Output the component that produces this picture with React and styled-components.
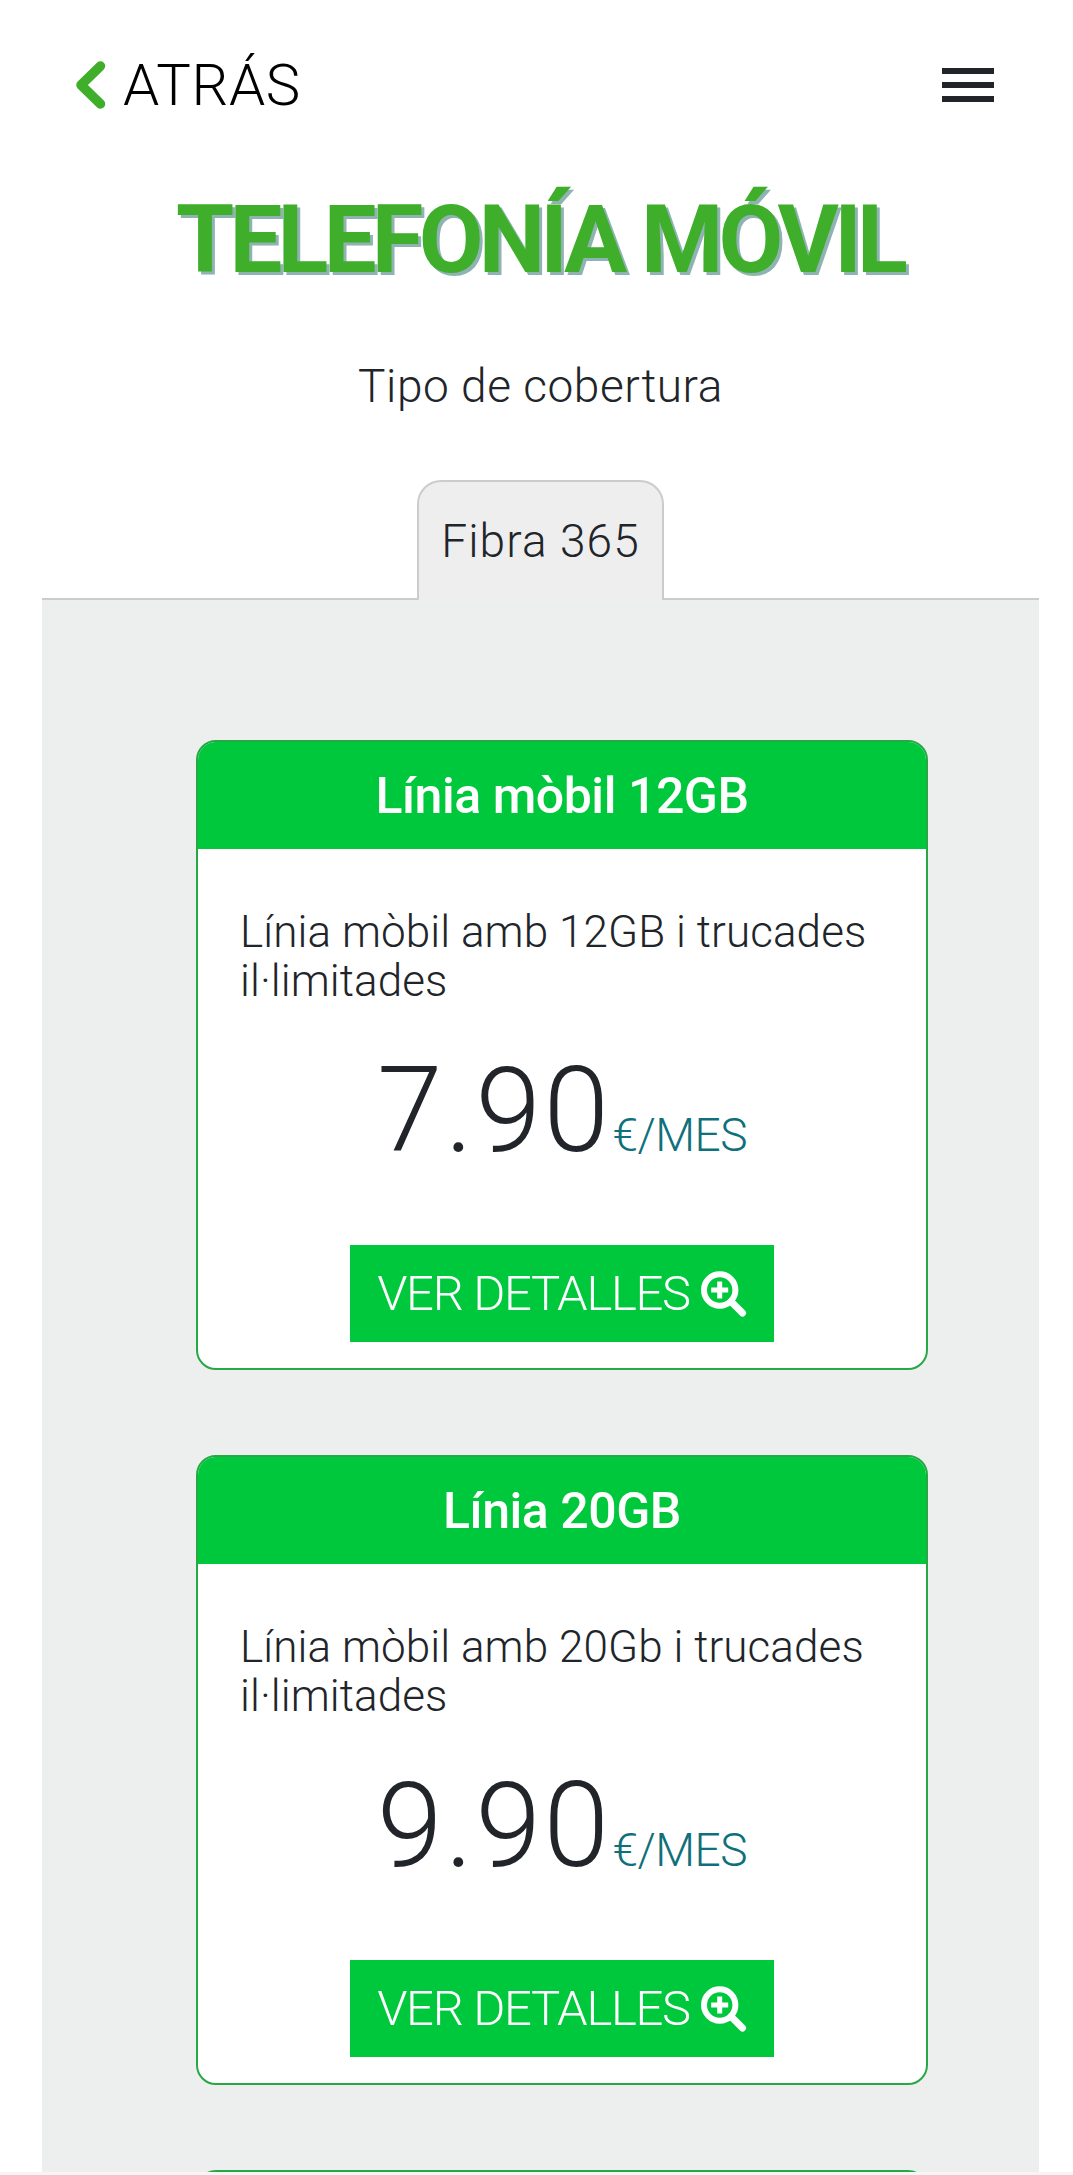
import React from "react";
import styled, { createGlobalStyle } from "styled-components";

const GlobalStyle = createGlobalStyle`
  html, body {
    margin: 0;
    padding: 0;
    background: #f5f5f5;
    overflow: hidden;
  }
  body {
    font-family: "Roboto", "Liberation Sans", sans-serif;
    font-weight: 300;
    color: #212529;
  }
`;

const Page = styled.div`
  width: 1073px;
  height: 2172px;
  background: #fff;
  overflow: hidden;
`;

const TopBar = styled.header`
  height: 170px;
  padding: 0 79px 0 76px;
  display: flex;
  align-items: center;
  justify-content: space-between;
  box-sizing: border-box;
`;

const BackLink = styled.a`
  display: flex;
  align-items: center;
  gap: 17px;
  font-size: 58px;
  letter-spacing: 0.6px;
  color: #000;
`;

const Burger = styled.div`
  width: 52px;
  display: flex;
  flex-direction: column;
  gap: 8px;
`;

const BurgerBar = styled.span`
  height: 6px;
  background: #212529;
`;

const Title = styled.h1`
  margin: 25px 0 0;
  padding-left: 6px;
  text-align: center;
  font-size: 94px;
  line-height: 90px;
  font-weight: 700;
  letter-spacing: -4.75px;
  color: #3fae2a;
  text-shadow: 3px 3px 0 #8fb3b3;
`;

const Subtitle = styled.p`
  margin: 73px 0 0;
  padding-left: 8px;
  text-align: center;
  font-size: 46px;
  line-height: 56px;
  letter-spacing: 0.55px;
`;

const Tabs = styled.div`
  margin: 66px 34px 0 42px;
  display: flex;
  justify-content: center;
  height: 120px;
  border-bottom: 2px solid #ccc;
  box-sizing: border-box;
`;

const Tab = styled.div`
  width: 247px;
  height: 120px;
  box-sizing: border-box;
  border: 2px solid #ccc;
  border-bottom: none;
  border-radius: 24px 24px 0 0;
  background: #eee;
  display: flex;
  align-items: center;
  justify-content: center;
  font-size: 46px;
  letter-spacing: 1.1px;
`;

const Panel = styled.main`
  margin: 0 34px 0 42px;
  background: #edeeee;
  padding: 140px 0 0 154px;
  height: 1600px;
  box-sizing: border-box;
  display: flex;
  flex-direction: column;
  gap: 85px;
`;

const Card = styled.article`
  width: 732px;
  height: 630px;
  flex: none;
  box-sizing: border-box;
  background: #fff;
  border: 2px solid #28a745;
  border-radius: 20px;
  overflow: hidden;
  display: flex;
  flex-direction: column;
`;

const CardHead = styled.h2`
  margin: 0;
  height: 107px;
  flex: none;
  background: #00c83c;
  color: #fff;
  display: flex;
  align-items: center;
  justify-content: center;
  font-size: 50px;
  font-weight: 500;
  letter-spacing: -0.45px;
`;

const CardBody = styled.div`
  padding: 59px 42px 0 42px;
  display: flex;
  flex-direction: column;
  align-items: center;
`;

const Description = styled.p`
  margin: 0;
  align-self: stretch;
  font-size: 44px;
  line-height: 49px;
  letter-spacing: 0.08px;
`;

const PriceRow = styled.div`
  margin-top: 46px;
  height: 118px;
  display: flex;
  align-items: baseline;
  justify-content: center;
  color: #212529;
`;

const Price = styled.span`
  font-size: 118px;
  line-height: 118px;
  letter-spacing: 2.5px;
`;

const Unit = styled.span`
  margin-left: 1px;
  font-size: 46px;
  letter-spacing: -0.5px;
  color: #0f6f7a;
`;

const DetailsButton = styled.a`
  margin-top: 75px;
  width: 424px;
  height: 97px;
  background: #00c83c;
  color: #fff;
  display: flex;
  align-items: center;
  justify-content: center;
  gap: 11px;
  font-size: 49px;
  letter-spacing: -1.3px;
`;

const plans = [
  { name: "Línia mòbil 12GB", text: "Línia mòbil amb 12GB i trucades il·limitades", price: "7.90" },
  { name: "Línia 20GB", text: "Línia mòbil amb 20Gb i trucades il·limitades", price: "9.90" },
];

function Chevron() {
  return (
    <svg width="30" height="48" viewBox="0 0 30 48" fill="none">
      <path d="M24.5 5 L5 24 L24.5 43" stroke="#3fae2a" strokeWidth="9.5" strokeLinecap="round" strokeLinejoin="round" />
    </svg>
  );
}

function SearchPlus() {
  return (
    <svg width="46" height="46" viewBox="0 0 46 46" fill="none" stroke="#fff">
      <circle cx="18.7" cy="19" r="15.7" strokeWidth="6" />
      <path d="M30 30.5 L41.5 42" strokeWidth="7" strokeLinecap="round" />
      <path d="M18.7 10.5 V27.5 M10.2 19 H27.2" strokeWidth="5" />
    </svg>
  );
}

export default function App() {
  return (
    <Page>
      <GlobalStyle />
      <TopBar>
        <BackLink>
          <Chevron />
          ATRÁS
        </BackLink>
        <Burger>
          <BurgerBar />
          <BurgerBar />
          <BurgerBar />
        </Burger>
      </TopBar>
      <Title>TELEFONÍA MÓVIL</Title>
      <Subtitle>Tipo de cobertura</Subtitle>
      <Tabs>
        <Tab>Fibra 365</Tab>
      </Tabs>
      <Panel>
        {plans.map((plan) => (
          <Card key={plan.name}>
            <CardHead>{plan.name}</CardHead>
            <CardBody>
              <Description>{plan.text}</Description>
              <PriceRow>
                <Price>{plan.price}</Price>
                <Unit>€/MES</Unit>
              </PriceRow>
              <DetailsButton>
                VER DETALLES
                <SearchPlus />
              </DetailsButton>
            </CardBody>
          </Card>
        ))}
        {/* only the top edge of the next card shows above the fold */}
        <Card>
          <CardHead />
        </Card>
      </Panel>
    </Page>
  );
}
